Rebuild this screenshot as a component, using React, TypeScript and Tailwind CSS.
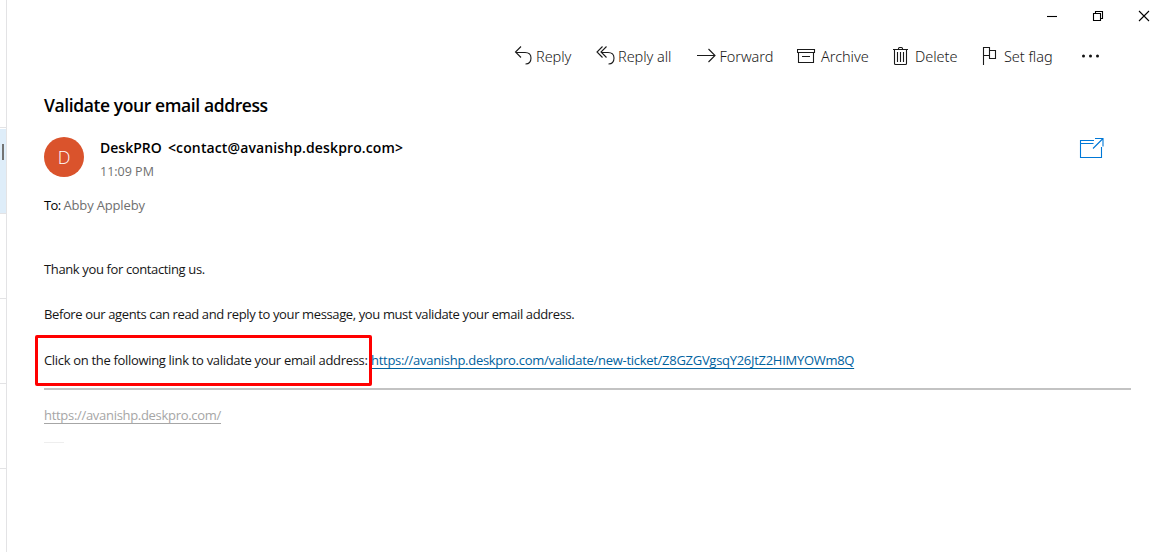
import type { ReactNode } from "react";

function Icon({ w, h, className = "", children }: { w: number; h: number; className?: string; children: ReactNode }) {
  return (
    <svg width={w} height={h} viewBox={`0 0 ${w} ${h}`} fill="none" stroke="currentColor" strokeWidth="1.1" className={`shrink-0 ${className}`}>
      {children}
    </svg>
  );
}

function Action({ icon, label, className, gap = "w-[22px]" }: { icon: ReactNode; label: string; className: string; gap?: string }) {
  return (
    <button className={`flex h-10 shrink-0 items-center whitespace-nowrap text-left ${className}`}>
      <span className={`flex shrink-0 ${gap}`}>{icon}</span>
      <span className="pt-0.5 tracking-[-0.05px]">{label}</span>
    </button>
  );
}

function Sidebar() {
  return (
    <aside className="flex h-full w-[7px] shrink-0 flex-col border-r border-[#e3e3e5]">
      <div className="h-32 border-b border-[#e3e3e5]" />
      <div className="mt-px flex h-[85px] justify-end border-b border-[#e3e3e5] bg-[#deedf9] pr-0.5 pt-4">
        <div className="mt-[-1px] h-4 w-0.5 bg-[#737373]" />
      </div>
      <div className="h-[85px] border-b border-[#e3e3e5]" />
      <div className="h-[85px] border-b border-[#e3e3e5]" />
      <div className="h-[85px] border-b border-[#e3e3e5]" />
    </aside>
  );
}

export default function App() {
  return (
    <div className="flex h-[552px] w-[1166px] overflow-hidden bg-white font-['Open_Sans',sans-serif] text-black">
      <Sidebar />
      <main className="flex min-w-0 flex-1 flex-col">
        <header className="flex h-8 shrink-0 items-center justify-end pr-[16px]">
          <Icon w={12} h={12} className="mr-[34px]"><path d="M1 6.5h10" /></Icon>
          <Icon w={12} h={12} className="mr-[34px]"><path d="M1.5 3.5h7v7h-7zM3.5 3.5v-2h7v7h-2" /></Icon>
          <Icon w={12} h={12}><path d="m1 1 10 10M11 1 1 11" /></Icon>
        </header>

        <nav className="flex h-12 shrink-0 items-center pl-[507px] font-['Noto_Sans',sans-serif] text-[14.5px] font-[340] text-[#1a1a1a]">
          <Action className="w-[82px]" label="Reply" icon={<Icon w={18} h={20}><path d="M7 .5 1.500 6 7 11.500M1.500 6.500h9.500c4 0 6 2.500 6 5.500 0 3.500-2 6-5.500 6" /></Icon>} />
          <Action className="w-[101px]" label="Reply all" icon={<Icon w={19} h={20}><path d="M6.500.5 1 6l5.500 5.500M10.500 .5 5 6l5.500 5.500M5.500 6.500H12c4 0 6 2.500 6 5.500 0 3.500-2 6-5.500 6" /></Icon>} />
          <Action className="w-[100px]" gap="w-[22.500px]" label="Forward" icon={<Icon w={19} h={18}><path d="M0 8.500h18M11.500 2 18 8.500 11.500 15" /></Icon>} />
          <Action className="w-24" gap="w-6" label="Archive" icon={<Icon w={19} h={16}><path d="M.5 1.500h17v3H.5zM1.500 4.500v10h15v-10M5 8.500h8" /></Icon>} />
          <Action className="w-[89px]" label="Delete" icon={<Icon w={16} h={20}><path d="M0 3.500h15M5.500 3.500v-1q0-1 1-1h2q1 0 1 1v1M1.500 3.500v14q0 1 1 1h10q1 0 1-1v-14M4.500 6v10M7.500 6v10M10.500 6v10" /></Icon>} />
          <Action className="w-[100px]" label="Set flag" icon={<Icon w={15} h={20}><path d="M1.500 19V1.500h6v8h-6M7.500 4.500h6v8h-6v-3" /></Icon>} />
          <svg width="18" height="4" viewBox="0 0 18 4" fill="#111" className="mt-[-1px] shrink-0"><circle cx="1.500" cy="2" r="1.500" /><circle cx="8.500" cy="2" r="1.500" /><circle cx="15.500" cy="2" r="1.500" /></svg>
        </nav>

        <article className="flex flex-1 flex-col pl-[37px] pr-[35px]">
          <h1 className="mt-3 h-[26px] text-[17.5px] font-semibold leading-[26px] tracking-[-0.4px]">Validate your email address</h1>
          <div className="mt-[17px] flex items-start">
            <div className="mt-0.5 flex size-10 items-center justify-center rounded-full bg-[#da532c] text-[18px] font-light text-white">D</div>
            <div className="ml-4 mt-px flex-1">
              <div className="flex h-6 items-center whitespace-nowrap text-sm font-semibold">
                <span className="w-[68px]">DeskPRO</span>
                <span className="tracking-[0.12px]">&lt;contact@avanishp.deskpro.com&gt;</span>
              </div>
              <div className="h-6 text-[12.5px] leading-6 text-[#6f6f6f]">11:09 PM</div>
            </div>
            <Icon w={26} h={24} className="mr-[26px] mt-[3px] text-[#0078d7]">
              <path d="M15 2.500H1.500v17h21V9M1.500 5.500h13M16 .5h8v8M24 .5 14 10.500" />
            </Icon>
          </div>
          <div className="mt-[11px] flex h-5 text-[13px] leading-5">
            <span className="w-[19.500px] tracking-[-0.6px]">To:</span>
            <span className="tracking-[-0.16px] text-[#6f6f6f]">Abby Appleby</span>
          </div>
          <div className="mt-[44px] whitespace-nowrap text-[13px] leading-5 text-[#161616]">
            <p className="tracking-[-0.37px]">Thank you for contacting us.</p>
            <p className="mt-[25px] tracking-[-0.38px]">Before our agents can read and reply to your message, you must validate your email address.</p>
            <p className="relative mt-[26px] flex">
              <span className="w-[327px] tracking-[-0.32px]">Click on the following link to validate your email address:</span>
              <a href="#" className="tracking-[-0.285px] text-[#00629f] underline decoration-1 underline-offset-[3px]">https://avanishp.deskpro.com/validate/new-ticket/Z8GZGVgsqY26JtZ2HIMYOWm8Q</a>
              <span className="pointer-events-none absolute left-[-9px] top-[-15px] h-[51px] w-[337px] rounded-[2px] border-[3px] border-[#ff0000]" />
            </p>
          </div>
          <hr className="mt-[18px] h-0.5 border-0 bg-[#c3c3c3]" />
          <a href="#" className="mt-[15px] self-start text-[13px] leading-5 tracking-[-0.3px] text-[#a6a6a6] underline decoration-1 underline-offset-[3px]">https://avanishp.deskpro.com/</a>
          <div className="mt-[17px] h-px w-5 bg-[#eeeeee]" />
        </article>
      </main>
    </div>
  );
}
